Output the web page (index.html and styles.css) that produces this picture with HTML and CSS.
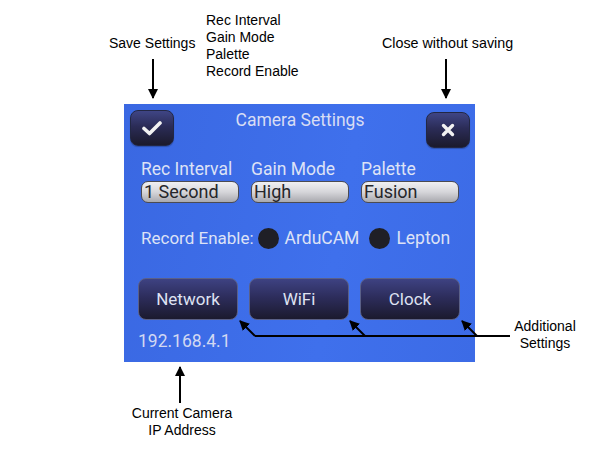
FILE: index.html
```html
<!DOCTYPE html>
<html>
<head>
<meta charset="utf-8">
<link rel="stylesheet" href="styles.css">
</head>
<body>
<div class="figure">
  <div class="screen">
    <div class="header">
      <div class="icon-btn">
        <svg width="20" height="16" viewBox="0 0 20 16"><path d="M2 8.5 L7.5 13.5 L18 3" fill="none" stroke="#f2f2f2" stroke-width="3.6" stroke-linecap="round" stroke-linejoin="round"/></svg>
      </div>
      <div class="title">Camera Settings</div>
      <div class="icon-btn close">
        <svg width="14" height="14" viewBox="0 0 14 14"><path d="M2.5 2.5 L11.5 11.5 M11.5 2.5 L2.5 11.5" stroke="#f2f2f2" stroke-width="3.4" stroke-linecap="round"/></svg>
      </div>
    </div>
    <div class="fields">
      <div class="field">
        <div class="label">Rec Interval</div>
        <div class="select">1 Second</div>
      </div>
      <div class="field">
        <div class="label">Gain Mode</div>
        <div class="select">High</div>
      </div>
      <div class="field">
        <div class="label">Palette</div>
        <div class="select">Fusion</div>
      </div>
    </div>
    <div class="record">
      <span class="rec-label">Record Enable:</span>
      <span class="dot"></span><span class="opt">ArduCAM</span>
      <span class="dot"></span><span class="opt">Lepton</span>
    </div>
    <div class="buttons">
      <div class="btn">Network</div>
      <div class="btn">WiFi</div>
      <div class="btn">Clock</div>
    </div>
    <div class="ip">192.168.4.1</div>
  </div>

  <div class="note note-save">Save Settings</div>
  <div class="note note-list">Rec Interval<br>Gain Mode<br>Palette<br>Record Enable</div>
  <div class="note note-close">Close without saving</div>
  <div class="note note-add">Additional<br>Settings</div>
  <div class="note note-ip">Current Camera<br>IP Address</div>

  <svg class="arrows" width="600" height="468" viewBox="0 0 600 468">
    <defs>
      <marker id="ah" viewBox="0 0 10 10" refX="9" refY="5" markerWidth="5" markerHeight="5" orient="auto">
        <path d="M0 0 L10 5 L0 10 Z" fill="#000"/>
      </marker>
    </defs>
    <g stroke="#000" stroke-width="2" fill="none">
      <line x1="153" y1="59" x2="153" y2="98" marker-end="url(#ah)"/>
      <line x1="446" y1="59" x2="446" y2="98" marker-end="url(#ah)"/>
      <line x1="180" y1="403" x2="180" y2="367" marker-end="url(#ah)"/>
      <line x1="255" y1="336" x2="510" y2="336"/>
      <line x1="255" y1="336" x2="240" y2="321" marker-end="url(#ah)"/>
      <line x1="365" y1="336" x2="350" y2="321" marker-end="url(#ah)"/>
      <line x1="477" y1="336" x2="462" y2="321" marker-end="url(#ah)"/>
    </g>
  </svg>
</div>
</body>
</html>
```

FILE: styles.css
```css
html, body {
  margin: 0;
  padding: 0;
  background: #ffffff;
}

.figure {
  position: relative;
  width: 600px;
  height: 468px;
  padding: 104px 0 0 124px;
  box-sizing: border-box;
  font-family: "Liberation Sans", Arial, sans-serif;
}

.screen {
  width: 351px;
  height: 258px;
  box-sizing: border-box;
  padding: 6px 5px 0 6px;
  background: linear-gradient(100deg, #3a68e2 0%, #3f70ec 60%, #3c6be6 100%);
  font-family: Roboto, "Noto Sans", sans-serif;
  color: #dde2f6;
  display: flex;
  flex-direction: column;
}

.header {
  display: flex;
  align-items: flex-start;
  height: 36px;
}

.icon-btn {
  width: 44px;
  height: 36px;
  box-sizing: border-box;
  border-radius: 8px;
  border: 1px solid #222744;
  background: linear-gradient(180deg, #3f4585 0%, #2b2c57 45%, #1b1a2c 100%);
  display: flex;
  align-items: center;
  justify-content: center;
  box-shadow: 0 1px 1px rgba(0,0,0,0.25);
}

.icon-btn.close {
  margin-top: 2px;
}

.title {
  flex: 1;
  text-align: center;
  font-size: 17.5px;
  line-height: 20px;
  margin-top: 0;
  color: #d8ddf4;
}

.fields {
  display: grid;
  grid-template-columns: 98px 98px 98px;
  column-gap: 12px;
  margin: 13px 0 0 11px;
}

.label {
  font-size: 17.5px;
  line-height: 20px;
  white-space: nowrap;
}

.select {
  margin-top: 2px;
  height: 22px;
  box-sizing: border-box;
  border: 1px solid #4b4b52;
  border-radius: 7px;
  background: linear-gradient(180deg, #f0f0f2 0%, #d6d6da 50%, #a9a9ae 100%);
  color: #26262a;
  font-size: 18px;
  line-height: 20px;
  padding-left: 2px;
  white-space: nowrap;
}

.record {
  display: flex;
  align-items: center;
  margin: 24px 0 0 11px;
  height: 22px;
  font-size: 17px;
  white-space: nowrap;
}

.rec-label {
  margin-right: 4px;
}

.dot {
  width: 21px;
  height: 21px;
  border-radius: 50%;
  background: #1f1f26;
  margin-right: 6px;
}

.opt {
  font-size: 17.5px;
  margin-right: 10px;
}

.buttons {
  display: flex;
  gap: 11px;
  margin: 29px 0 0 8px;
}

.btn {
  width: 100px;
  height: 42px;
  box-sizing: border-box;
  border-radius: 8px;
  border: 1px solid #5a6088;
  background: linear-gradient(180deg, #3e4282 0%, #2d2d5c 45%, #1b1a2e 100%);
  color: #dfe2f2;
  font-size: 17px;
  display: flex;
  align-items: center;
  justify-content: center;
}

.ip {
  margin: 11px 0 0 8px;
  font-size: 17.5px;
  line-height: 20px;
  color: #d2d8f2;
}

.note {
  position: absolute;
  font-size: 14px;
  line-height: 17px;
  color: #000;
}

.note-save { left: 109px; top: 35px; }
.note-list { left: 206px; top: 12px; }
.note-close { left: 382px; top: 35px; font-size: 14.3px; }
.note-add { left: 505px; top: 318px; width: 80px; text-align: center; }
.note-ip { left: 122px; top: 405px; width: 120px; text-align: center; }

.arrows {
  position: absolute;
  left: 0;
  top: 0;
  pointer-events: none;
}
```
